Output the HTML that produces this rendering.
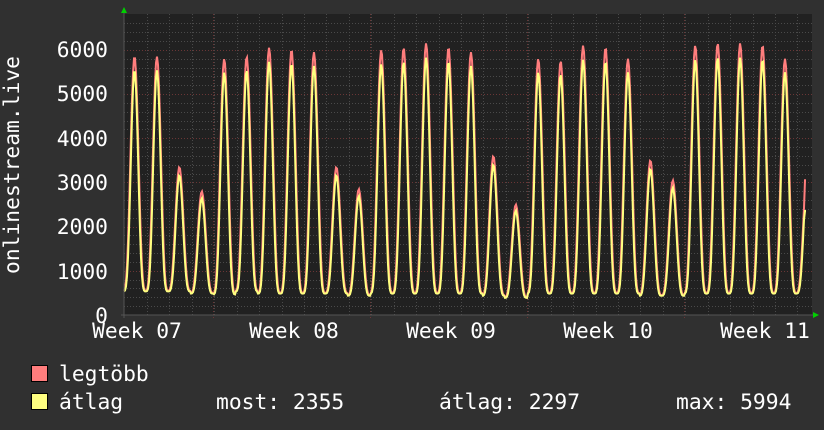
<!DOCTYPE html>
<html><head><meta charset="utf-8"><style>
html,body{margin:0;padding:0;background:#303030;width:824px;height:430px;overflow:hidden}
text{font-family:"DejaVu Sans Mono","Liberation Mono",monospace;fill:#fff}
</style></head><body>
<svg id="s" width="824" height="430" xmlns="http://www.w3.org/2000/svg">
<rect x="0" y="0" width="824" height="430" fill="#303030"/>
<rect x="124" y="14" width="688" height="301" fill="#212121"/>
<g id="grid"></g>
<polyline id="mx" fill="none" stroke="#ff7d7d" stroke-width="2"/>
<polyline id="av" fill="none" stroke="#ffff80" stroke-width="2"/>
<line x1="124" y1="12" x2="124" y2="318" stroke="#555" stroke-width="1"/>
<line x1="121" y1="315" x2="814" y2="315" stroke="#555" stroke-width="1"/>
<polygon points="121,13 127,13 124,7" fill="#00d000"/>
<polygon points="813,312 813,318 819,315" fill="#00d000"/>
<g font-size="21.3" text-anchor="end">
<text x="108" y="57">6000</text>
<text x="108" y="101">5000</text>
<text x="108" y="146">4000</text>
<text x="108" y="190">3000</text>
<text x="108" y="234">2000</text>
<text x="108" y="279">1000</text>
<text x="108" y="323">0</text>
</g>
<g font-size="21.3" text-anchor="middle">
<text x="137" y="338">Week 07</text>
<text x="294" y="338">Week 08</text>
<text x="451" y="338">Week 09</text>
<text x="608" y="338">Week 10</text>
<text x="765" y="338">Week 11</text>
</g>
<text font-size="21.3" transform="translate(19,165) rotate(-90)" text-anchor="middle">onlinestream.live</text>
<rect x="31.5" y="365.5" width="16" height="16" fill="#ff7d7d" stroke="#000"/>
<rect x="31.5" y="393.5" width="16" height="16" fill="#ffff80" stroke="#000"/>
<g font-size="21.3">
<text x="59" y="381">legtöbb</text>
<text x="59" y="409">átlag</text>
<text x="216" y="409">most: 2355</text>
<text x="439" y="409">átlag: 2297</text>
<text x="676" y="409">max: 5994</text>
</g>
</svg>
<script>
var ns="http://www.w3.org/2000/svg",g=document.getElementById("grid");
function ln(x1,y1,x2,y2,c){var l=document.createElementNS(ns,"line");l.setAttribute("x1",x1);l.setAttribute("y1",y1);l.setAttribute("x2",x2);l.setAttribute("y2",y2);l.setAttribute("stroke",c);l.setAttribute("stroke-width","1");l.setAttribute("stroke-dasharray","1,2");g.appendChild(l);}
var Y=function(v){return 315-v*0.04417;};
for(var v=200;v<=6600;v+=200){var y=Math.round(Y(v))+0.5;if(y<14)break;ln(124,y,812,y,v%1000==0?"#6a3636":"#4a4a4a");}
var P=22.43,x0=134.5;
for(var i=-1;i<32;i++){var x=x0-10+i*P;if(x<125||x>812)continue;ln(Math.round(x)+0.5,14,Math.round(x)+0.5,315,"#4a4a4a");}
[213,370,527,684].forEach(function(x){ln(x+0.5,14,x+0.5,318,"#6a3636");});
var pk=[5850,5850,3350,2800,5800,5850,6050,6000,5950,3350,2850,6000,6050,6150,6050,5950,3600,2500,5800,5750,6100,6050,5800,3500,3050,6100,6150,6150,6100,5800,3300];
var mn=[550,550,550,500,480,550,500,500,500,500,450,500,500,500,500,500,450,400,500,500,500,500,500,450,450,500,500,500,500,500,500];
var a=[],b=[];
for(var x=124;x<=806;x++){var t=(x-x0)/P,k=Math.round(t);if(k<0)k=0;if(k>30)k=30;var d=x-(x0+k*P);
var f=Math.pow((1+Math.cos(2*Math.PI*d/P))/2,1.6);var m=mn[k];var v=m+(pk[k]-m)*f;
var av=m*0.97+(pk[k]*0.95-m)*Math.pow(f,1.2);
if(x>=805){v=3050;av=2355;}
a.push(x+","+Y(v).toFixed(1));b.push(x+","+Y(av).toFixed(1));}
document.getElementById("mx").setAttribute("points",a.join(" "));
document.getElementById("av").setAttribute("points",b.join(" "));
</script>
</body></html>
